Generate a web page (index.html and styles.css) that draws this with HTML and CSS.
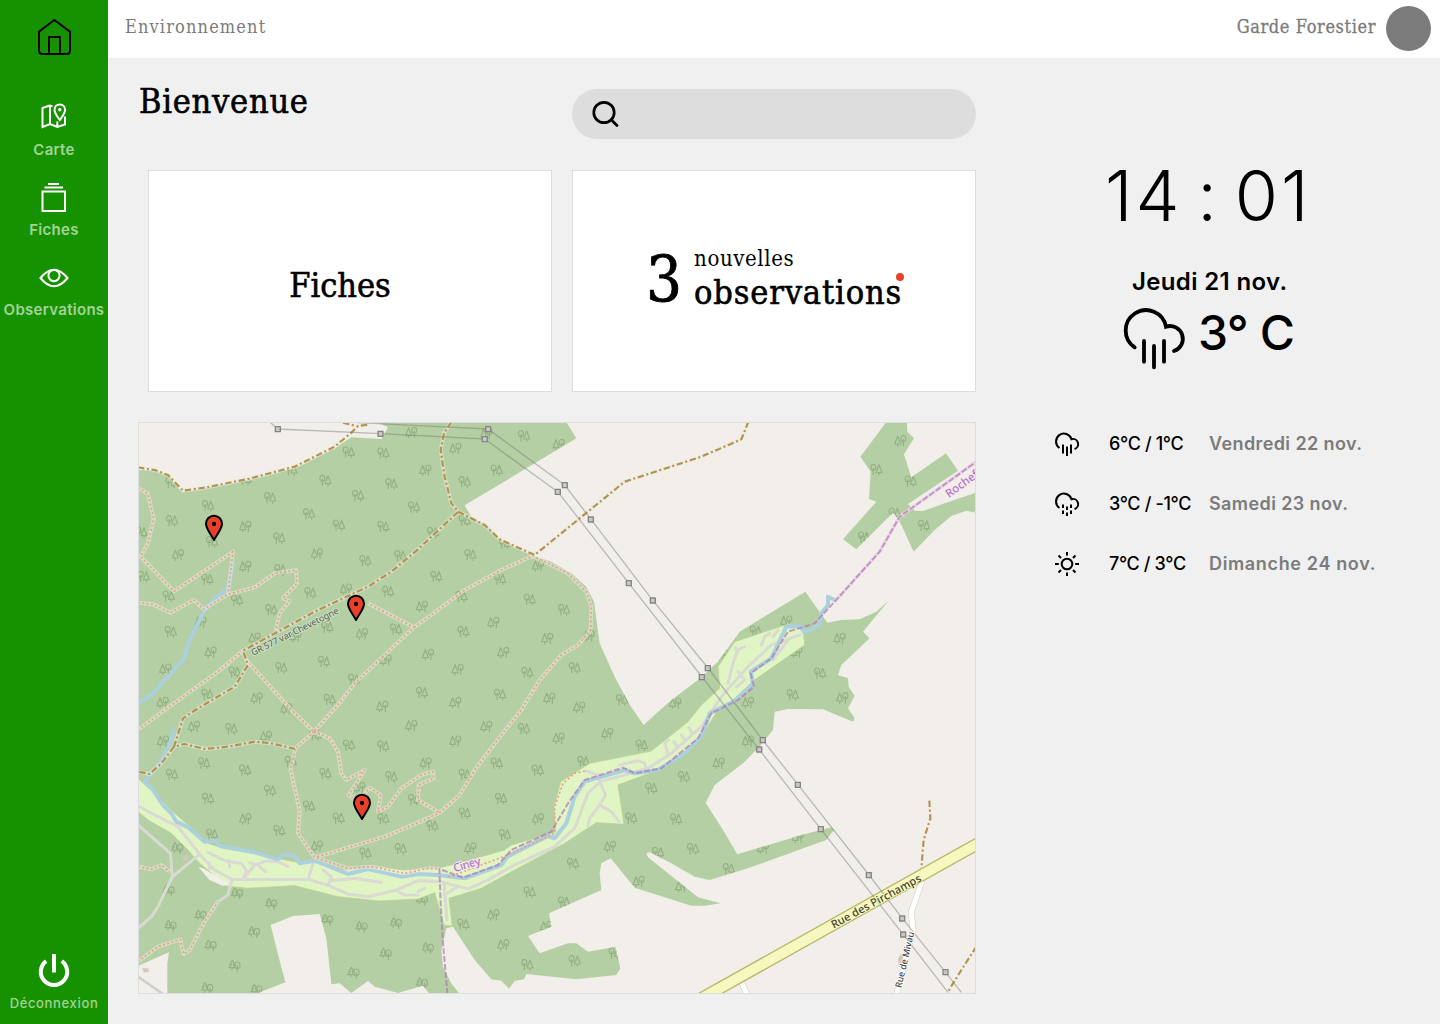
FILE: index.html
```html
<!DOCTYPE html>
<html lang="fr">
<head>
<meta charset="utf-8">
<title>Environnement</title>
<link rel="stylesheet" href="styles.css">
</head>
<body>
<div class="app">
  <nav class="sidebar">
    <a class="home" aria-label="Accueil">
      <svg width="36" height="38" viewBox="0 0 36 38"><path d="M3 13.600 L18.300 2 L34 13.600 V32.500 Q34 36 30.500 36 H6.500 Q3 36 3 32.500 Z M13 36 V19 H24 V36"/></svg>
    </a>
    <a class="item">
      <svg width="30" height="30" viewBox="0 0 30 30"><path d="M13.500 4.200 L10.500 3.500 L3.500 6 V25 L11 22 L18.300 25 L26 22.500 V14.500 M11 4 V22 M18.300 25 V19.500 M20.800 18 C18.300 14.500 15.500 11.300 15.500 7.800 C15.500 4.700 17.800 2.500 20.800 2.500 C23.800 2.500 26.100 4.700 26.100 7.800 C26.100 11.300 23.300 14.500 20.800 18 Z"/><circle class="fill" cx="20.800" cy="7.800" r="1.700"/></svg>
      <span>Carte</span>
    </a>
    <a class="item">
      <svg width="30" height="30" viewBox="0 0 30 30"><path d="M3.500 9.500 H26 V29 H3.500 Z M5.500 5.600 H24 M9 2 H20"/></svg>
      <span>Fiches</span>
    </a>
    <a class="item">
      <svg width="30" height="30" viewBox="0 0 30 30"><path d="M1.500 16 Q15 -.5 28.500 16 Q15 32.500 1.500 16 Z"/><circle cx="15" cy="13.600" r="5.600"/></svg>
      <span>Observations</span>
    </a>
    <a class="logout">
      <svg width="34" height="34" viewBox="0 0 34 34"><path d="M9.200 7.200 A13.200 13.200 0 1 0 24.800 7.200 M17 0 V18.500"/></svg>
      <span>Déconnexion</span>
    </a>
  </nav>

  <div class="page">
    <header class="topbar">
      <span class="brand">Environnement</span>
      <div class="user"><span>Garde Forestier</span><i class="avatar"></i></div>
    </header>

    <div class="content">
      <main class="main">
        <div class="heading">
          <h1>Bienvenue</h1>
          <div class="search">
            <svg width="30" height="30" viewBox="0 0 30 30"><circle cx="13" cy="13.500" r="10.200"/><path d="M20.500 21 L26 26.500"/></svg>
          </div>
        </div>
        <div class="cards">
          <section class="card"><h2>Fiches</h2></section>
          <section class="card">
            <div class="news">
              <span class="count">3</span>
              <div class="news-text"><span class="small">nouvelles</span><span class="large">observations<i class="dot"></i></span></div>
            </div>
          </section>
        </div>
        <div class="map">
          <svg viewBox="3 9 2508 1710" preserveAspectRatio="none">
            <defs>
              <marker id="treeA" markerUnits="userSpaceOnUse" markerWidth="40" markerHeight="40" refX="20" refY="20"><path class="tree" d="M11 36 V14 M11 22 C1 22 1 4 11 4 C21 4 21 22 11 22 M28 37 V29 M19 29 L28 5 L37 29 Z"/></marker>
              <marker id="treeB" markerUnits="userSpaceOnUse" markerWidth="40" markerHeight="40" refX="20" refY="20"><path class="tree" d="M29 36 V14 M29 22 C19 22 19 4 29 4 C39 4 39 22 29 22 M12 37 V29 M3 29 L12 5 L21 29 Z"/></marker>
              <marker id="treeC" markerUnits="userSpaceOnUse" markerWidth="40" markerHeight="40" refX="20" refY="20"><path class="tree" d="M12 33 V25 M3 25 L10 15 H6 L13 3 L20 15 H16 L20 25 Z M28 37 V18 M28 28 C18 28 18 8 28 8 C39 8 39 28 28 28"/></marker>
              <clipPath id="woods"><path d="M0 150 L40 150 90 165 132 215 200 205 330 180 470 145 590 85 640 52 730 57 750 22 715 6 H1285 L1315 55 980 256 1000 290 1050 320 1085 358 1180 405 1240 425 1300 460 1345 500 1368 545 1378 620 1385 670 1430 770 1477 857 1517 915 1583 855 1620 825 1680 780 1740 725 1805 635 2002 515 2068 608 2110 600 2165 598 2215 575 2253 541 2175 635 2195 655 2110 735 2100 765 2130 775 2132 800 2150 828 2130 865 2150 895 2145 905 2055 868 1950 867 1910 875 1905 930 1860 985 1815 1030 1730 1095 1703 1148 1755 1230 1798 1303 1990 1245 2080 1222 2088 1230 2065 1260 1830 1345 1715 1380 1670 1370 1600 1330 1535 1297 1525 1300 1530 1312 1680 1432 1748 1450 1700 1457 1660 1457 1490 1403 1418 1315 1390 1330 1385 1360 1390 1410 1233 1480 1240 1520 1170 1548 1205 1600 1290 1570 1315 1570 1350 1595 1432 1580 1447 1645 1435 1665 1315 1678 1165 1662 1158 1678 1130 1683 1113 1706 1090 1682 1060 1678 1010 1620 945 1520 925 1525 910 1590 915 1640 940 1690 965 1722 H875 L855 1697 780 1719 710 1700 690 1683 640 1719 605 1690 580 1693 565 1555 545 1482 465 1488 398 1515 418 1595 442 1687 360 1719 H88 V1630 L93 1597 0 1638 Z M2245 6 H2307 L2308 35 2328 55 2298 103 2320 172 2424 100 2460 152 2310 252 2330 272 2355 273 2420 250 2515 218 V278 L2485 272 2440 288 2390 330 2327 395 2283 300 2265 278 2155 388 2115 358 2215 245 2193 237 2198 155 2167 110 Z"/></clipPath>
            </defs>
            <rect class="land" width="2520" height="1730"/>
            <g clip-path="url(#woods)">
              <rect class="wood" width="2520" height="1730"/>
              <path class="group-a" d="M632 97 L736 100 562 182 460 150 760 192 660 227 396 234 210 258 513 282 102 303 603 316 736 320 424 355 222 366 682 423 787 408 427 450 208 478 92 529 17 470 517 519 750 515 297 541 400 570 98 636 568 622 774 628 430 744 558 725 290 757 648 779 208 824 575 839 828 262 10 338 100 188 322 178 1158 48 1076 151 980 186 980 302 885 338 997 405 895 470 1086 478 1175 539 1278 570 970 530 976 635 1310 744 1168 758 1086 824 1452 840 852 818 1100 370 2215 149 2318 184 2270 280 2358 317 2178 352 1853 634 2046 760 1964 825 280 927 633 976 736 979 198 1030 321 1051 102 1064 562 1061 760 1071 396 1112 210 1136 458 1025 513 1159 602 1195 424 1232 736 1197 222 1243 788 1287 682 1300 828 1139 532 945 1158 927 1076 1030 1199 1051 980 1064 1089 1136 980 1180 1511 976 1336 1025 1638 1071 1540 1105 1480 1195 1614 1198 883 1218 1100 1245 1305 1331 1175 1417 1278 1447 1560 1298 976 1513 1168 1635 1310 1623 1665 1287 1772 1347 1430 1600"/>
              <path class="group-b" d="M820 38 L322 320 120 405 322 440 537 402 624 508 188 607 350 655 472 650 672 642 218 697 82 748 743 721 356 835 733 860 74 848 952 86 1262 74 862 151 1200 438 852 560 1066 608 1228 656 1352 648 870 704 1096 698 959 749 1234 835 1324 862 952 848 1612 850 1045 42 2287 63 1945 604 2105 656 1975 697 1830 848 2113 834 1752 705 168 920 820 917 75 964 384 950 322 1197 537 1279 664 1103 445 867 1045 920 1262 955 1408 941 952 964 863 1030 1200 1197 997 1285 1416 1280 1502 1385 1066 1485 1096 1575 1742 1030 1830 964 1875 1285 1980 1252 1225 1520 1630 1400"/>
              <path class="group-c" d="M297 1421 L400 1452 188 1487 98 1518 568 1500 774 1510 348 1537 671 1521 218 1577 743 1602 290 1638 647 1659 208 1705 356 1710 92 1412 118 1285 870 1585 852 1690 852 1440"/>
            </g>
            <path class="meadow" d="M0 1075 L50 1120 100 1170 150 1215 210 1270 240 1280 420 1315 490 1330 530 1325 620 1350 700 1340 800 1350 905 1343 960 1330 1100 1290 1120 1275 1252 1237 1248 1160 1268 1085 1355 1030 1540 993 1650 905 1690 855 1745 805 1740 740 1790 665 1950 612 1995 618 2000 675 1850 780 1780 845 1740 870 1680 965 1575 1045 1440 1095 1458 1213 1375 1208 1280 1270 1130 1350 1030 1405 933 1435 943 1518 918 1515 890 1418 840 1437 725 1443 600 1430 470 1397 330 1405 265 1398 180 1325 150 1290 100 1240 30 1200 0 1175 Z"/>
            <path class="clearing" d="M180 1340 L195 1345 275 1393 255 1398 215 1380 Z"/>
            <g class="lanes">
              <path id="lane" class="lane" d="M0 1158 L60 1190 120 1220 185 1303 230 1350 282 1378 510 1378 570 1396 630 1422 690 1430 770 1412 840 1382 910 1385 990 1407 1050 1380 1130 1335 1250 1280 1310 1225 1350 1120 1385 1085 1440 1070 1530 1045 1600 1000 1690 920 1750 830 1830 740 1900 675 1985 645 M0 1215 L97 1300 103 1370 185 1303 M103 1370 L60 1460 40 1490 0 1525 M282 1378 L270 1425 240 1445 M210 1297 L260 1322 310 1330 325 1350 315 1378 350 1335 385 1323 420 1325 450 1340 M215 1345 L212 1328 M275 1340 L272 1322 M382 1355 L360 1335 335 1328 M510 1378 L528 1322 M570 1396 L580 1370 555 1350 M580 1382 L650 1375 730 1387 M775 1412 L800 1425 840 1425 M840 1415 L860 1405 M918 1390 L927 1500 M918 1425 L960 1400 M1385 1085 L1403 1125 1385 1155 1420 1175 1443 1205 M1385 1155 L1355 1195 1350 1217 M1343 1053 L1380 1065 1385 1085 M1445 1035 L1500 1022 1520 1030 1525 1045 M1590 1000 L1580 970 1592 960 M1618 980 L1608 965 M1640 960 L1630 945 M1662 938 L1652 922 M1770 790 L1785 730 1800 690 1820 680 M1795 690 L1792 682 M1800 755 L1820 780 1795 802 M1870 675 L1880 650 1895 640 M1905 650 L1920 630 M1905 720 L1950 660"/>
              <use href="#lane" class="lane-core"/>
            </g>
            <path class="lane" d="M0 1670 L75 1722"/>
            <path class="building" d="M132 1315 L145 1303 155 1313 142 1326 Z M12 1645 H30 L34 1655 18 1658 Z M2280 1615 L2292 1598 2300 1604 2292 1640 2282 1640 Z"/>
            <path class="river" d="M0 852 L45 820 135 720 155 660 200 570 230 535 265 510 280 470 284 432 M107 930 L95 975 60 1035 20 1085 45 1110 75 1155 100 1180 115 1205 150 1222 200 1265 235 1262 245 1278 350 1297 420 1318 440 1302 470 1308 485 1330 530 1322 630 1362 690 1347 790 1370 840 1362 900 1365 980 1375 1090 1335 1108 1310 1230 1248 1250 1255 1285 1210 1310 1130 1340 1085 1460 1050 1490 1060 1560 1050 1640 1000 1690 950 1715 880 1790 843 1845 790 1838 755 1900 715 1945 620 1985 618 2000 638 2045 615 2050 580 2070 555 2070 530 2090 540"/>
            <path class="track-halo" d="M0 203 L30 222 47 295 30 370 8 410 108 514 290 392 M0 548 L45 553 97 578 168 540 197 568 270 523 350 502 410 460 474 450 477 490 435 535 455 543 425 580 412 635 M315 692 L240 755 80 870 0 930 M325 720 L460 870 528 935 600 855 650 790 828 622 690 550 M828 622 L900 570 980 510 1100 445 1185 408 1290 460 1345 515 1360 560 1358 630 1320 675 1270 705 1205 780 1150 870 1090 945 1010 1050 965 1125 905 1178 840 1208 740 1250 532 1312 M528 935 L575 955 600 995 610 1060 625 1080 680 1050 632 1125 660 1145 695 1103 728 1125 720 1175 750 1160 790 1105 850 1065 885 1055 887 1075 842 1095 840 1140 905 1178 M528 935 L472 985 458 1050 485 1170 480 1240 530 1312 630 1345 700 1340 800 1360 870 1345 905 1347 M0 1625 L60 1580 127 1558 137 1602 155 1590 200 1505 240 1445 M285 392 L280 440 270 520 M0 1340 L40 1348 70 1335 95 1355"/>
            <path class="track" d="M0 203 L30 222 47 295 30 370 8 410 108 514 290 392 M0 548 L45 553 97 578 168 540 197 568 270 523 350 502 410 460 474 450 477 490 435 535 455 543 425 580 412 635 M315 692 L240 755 80 870 0 930 M325 720 L460 870 528 935 600 855 650 790 828 622 690 550 M828 622 L900 570 980 510 1100 445 1185 408 1290 460 1345 515 1360 560 1358 630 1320 675 1270 705 1205 780 1150 870 1090 945 1010 1050 965 1125 905 1178 840 1208 740 1250 532 1312 M528 935 L575 955 600 995 610 1060 625 1080 680 1050 632 1125 660 1145 695 1103 728 1125 720 1175 750 1160 790 1105 850 1065 885 1055 887 1075 842 1095 840 1140 905 1178 M528 935 L472 985 458 1050 485 1170 480 1240 530 1312 630 1345 700 1340 800 1360 870 1345 905 1347 M0 1625 L60 1580 127 1558 137 1602 155 1590 200 1505 240 1445 M285 392 L280 440 270 520 M0 1340 L40 1348 70 1335 95 1355 M930 1372 L1110 1305 1250 1240 1250 1160 1275 1090 1310 1060 1345 1052"/>
            <path class="trail-halo" d="M0 142 L50 150 90 165 135 212 200 203 330 177 470 140 590 80 640 38 660 18 690 14 M615 8 L655 18 M940 6 L918 40 908 90 920 170 940 250 962 276 1040 315 1085 358 1190 405 1460 185 1690 110 1810 58 1830 8 M960 276 L840 388 760 455 690 500 530 575 315 692 330 735 290 800 180 865 135 895 108 980 140 972 200 987 270 980 350 965 400 970 472 987 M108 980 L70 1030 35 1062 0 1055"/>
            <path class="trail" d="M0 142 L50 150 90 165 135 212 200 203 330 177 470 140 590 80 640 38 660 18 690 14 M615 8 L655 18 M940 6 L918 40 908 90 920 170 940 250 962 276 1040 315 1085 358 1190 405 1460 185 1690 110 1810 58 1830 8 M960 276 L840 388 760 455 690 500 530 575 315 692 330 735 290 800 180 865 135 895 108 980 140 972 200 987 270 980 350 965 400 970 472 987 M108 980 L70 1030 35 1062 0 1055 M2374 1142 L2377 1195 2357 1260 2350 1345 M2515 1580 L2470 1650 2430 1715"/>
            <path class="border-halo" d="M2090 545 L2225 395 2285 290 2515 125"/>
            <path class="border" d="M904 1345 L908 1450 915 1570 928 1719 M912 1350 L975 1373 1080 1335 1120 1290 1240 1235 1290 1150 1340 1080 1455 1043 1490 1060 1570 1045 1680 955 1720 880 1800 840 1848 800 1838 760 1900 715 1950 635 2030 610 2090 545 2225 395 2285 290 2515 125"/>
            <path class="street-case" d="M2355 1375 L2320 1475 2325 1530 2295 1650 2275 1725 M1810 1685 L1828 1725"/>
            <path class="street" d="M2355 1375 L2320 1475 2325 1530 2295 1650 2275 1725 M1810 1685 L1828 1725"/>
            <path class="road-case" d="M1680 1741 L2530 1265"/>
            <path class="road" d="M1680 1741 L2530 1265"/>
            <path class="power" d="M398 8 L419 27 728 41 1040 57 1260 216 1473 490 1692 771 1863 988 2049 1228 2296 1544 2430 1717 M660 8 L840 17 1050 27 1280 195 1359 298 1545 542 1710 744 1874 960 1980 1094 2193 1365 2293 1495 2423 1657 2470 1717"/>
            <path class="pylon" d="M412 20h15v15h-15z M720 34h15v15h-15z M1033 50h15v15h-15z M1043 20h15v15h-15z M1252 208h15v15h-15z M1273 188h15v15h-15z M1351 291h15v15h-15z M1465 482h15v15h-15z M1537 534h15v15h-15z M1684 764h15v15h-15z M1702 737h15v15h-15z M1856 981h15v15h-15z M1867 953h15v15h-15z M1972 1087h15v15h-15z M2041 1220h15v15h-15z M2185 1358h15v15h-15z M2285 1488h15v15h-15z M2288 1536h15v15h-15z M2415 1649h15v15h-15z"/>
            <text class="label path-label" textLength="290" transform="translate(345 708) rotate(-26.500)">GR 577 var Chevetogne</text>
            <text class="label admin-label" textLength="84" transform="translate(950 1357) rotate(-17)">Ciney</text>
            <text class="label admin-label" textLength="112" transform="translate(2433 234) rotate(-36)">Rochef</text>
            <text class="label road-label" textLength="302" transform="translate(2087 1526) rotate(-28.500)">Rue des Pirchamps</text>
            <text class="label street-label" textLength="172" transform="translate(2290 1705) rotate(-77)">Rue de Mivau</text>
            <path class="pin" d="M228 360 C216 338 204 326 204 311 A24 24 0 0 1 252 311 C252 326 240 338 228 360 Z M654 600 C642 578 630 566 630 551 A24 24 0 0 1 678 551 C678 566 666 578 654 600 Z M672 1197 C660 1175 648 1163 648 1148 A24 24 0 0 1 696 1148 C696 1163 684 1175 672 1197 Z"/>
            <path class="pin-hole" d="M228 312 h.01 M654 552 h.01 M672 1149 h.01"/>
          </svg>
        </div>
      </main>

      <aside class="weather">
        <div class="clock">14 : 01</div>
        <div class="date">Jeudi 21 nov.</div>
        <div class="now">
          <svg width="60" height="60" viewBox="252 477 180 180"><path d="M284 592 A61 61 0 1 1 378 530 A37 37 0 1 1 402 603 M312 573 V635 M342 588 V652 M372 573 V635"/></svg>
          <span>3° C</span>
        </div>
        <ul class="forecast">
          <li><svg width="24" height="24" viewBox="0 0 24 24"><path d="M4.500 16 A7.900 7.900 0 1 1 16.500 7.200 A5 5 0 0 1 19.500 17 M8 12.500 V21.500 M12 14.500 V24 M16 12.500 V21.500"/></svg><span class="temp">6°C / 1°C</span><span class="day">Vendredi 22 nov.</span></li>
          <li><svg width="24" height="24" viewBox="0 0 24 24"><path d="M4.500 16 A7.900 7.900 0 1 1 16.500 7.200 A5 5 0 0 1 19.500 17 M8 12.500 V16 M8 18.500 V22 M12 14.500 V18 M12 20.500 V24 M16 12.500 V16 M16 18.500 V22"/></svg><span class="temp">3°C / -1°C</span><span class="day">Samedi 23 nov.</span></li>
          <li><svg width="24" height="24" viewBox="0 0 24 24"><circle cx="12" cy="12" r="5.300"/><path d="M12 0 V3.500 M12 20.500 V24 M0 12 H3.800 M20.200 12 H24 M3.500 3.500 L6 6 M18 18 L20.500 20.500 M20.500 3.500 L18 6 M6 18 L3.500 20.500"/></svg><span class="temp">7°C / 3°C</span><span class="day wide">Dimanche 24 nov.</span></li>
        </ul>
      </aside>
    </div>
  </div>
</div>
</body>
</html>
```
FILE: styles.css
```css
* { box-sizing: border-box; }
body { margin: 0; background: #f0f0f0; color: #000; font-family: Inter, "Open Sans", sans-serif; font-feature-settings: "calt" 0; }
h1, h2, ul { margin: 0; padding: 0; list-style: none; font-weight: 400; }
svg { display: block; fill: none; overflow: visible; }
span, h1, h2 { white-space: nowrap; }

.app { display: flex; width: 1440px; height: 1024px; overflow: hidden; }

.sidebar { width: 108px; flex: none; display: flex; flex-direction: column; align-items: center; background: #169200; padding: 18px 0 11px; }
.sidebar svg { stroke: #fff; stroke-width: 2; }
.home { height: 79px; }
.home svg { stroke: #000; stroke-linejoin: round; }
.item { height: 80px; display: flex; flex-direction: column; align-items: center; padding-top: 5px; color: #a2d399; font-size: 15px; font-weight: 600; line-height: 20px; letter-spacing: .3px; gap: 8px; }
.item .fill { fill: #fff; stroke: none; }
.logout { margin-top: auto; display: flex; flex-direction: column; align-items: center; gap: 5px; color: #a2d399; font-size: 13px; font-weight: 500; line-height: 20px; letter-spacing: .65px; }
.logout svg { stroke-width: 4; }

.page { flex: 1; display: flex; flex-direction: column; }
.topbar { height: 58px; background: #fff; display: flex; justify-content: space-between; align-items: center; padding: 0 9px 2px 17px; color: #7b7b7b; font-family: "DejaVu Serif Condensed", "DejaVu Serif", serif; font-stretch: condensed; font-size: 18px; }
.brand { line-height: 54px; align-self: flex-start; letter-spacing: 1.15px; }
.user { display: flex; align-items: center; gap: 10px; letter-spacing: .62px; -webkit-text-stroke: .3px #7b7b7b; }
.user span { margin-top: -3px; }
.avatar { width: 45px; height: 45px; border-radius: 50%; background: #7b7b7b; }

.content { flex: 1; display: flex; padding-left: 30px; }
.main { width: 838px; display: flex; flex-direction: column; font-family: "DejaVu Serif Condensed", "DejaVu Serif", serif; font-stretch: condensed; }
.heading { height: 112px; display: flex; justify-content: space-between; align-items: flex-start; padding-top: 31px; }
h1 { font-size: 34px; line-height: 24px; padding-left: 1px; letter-spacing: .75px; -webkit-text-stroke: .6px #000; }
.search { width: 404px; height: 50px; border-radius: 25px; background: #ddd; padding: 10px 19px; }
.search svg { stroke: #000; stroke-width: 2.7; stroke-linecap: round; }
.cards { display: grid; grid-template-columns: 404px 404px; gap: 20px; height: 222px; padding-left: 10px; }
.card { background: #fff; border: 1px solid #ddd; display: flex; align-items: center; justify-content: center; }
h2 { font-size: 34px; line-height: 40px; padding: 8px 20px 0 0; -webkit-text-stroke: .6px #000; }
.news { display: flex; align-items: center; gap: 12px; }
.count { font-size: 63px; line-height: 60px; -webkit-text-stroke: .8px #000; }
.news-text { display: flex; flex-direction: column; margin-top: -9px; }
.small { font-size: 22px; line-height: 30px; letter-spacing: .6px; }
.large { font-size: 34px; line-height: 36px; position: relative; letter-spacing: .85px; -webkit-text-stroke: .6px #000; }
.dot { position: absolute; right: -2px; top: -1px; width: 8px; height: 8px; border-radius: 50%; background: #ea4226; }

.map { margin-top: 30px; height: 572px; border: 1px solid #ddd; overflow: hidden; }
.map svg { width: 836px; height: 570px; overflow: hidden; }
.map path { stroke-linejoin: round; }
.land, .clearing { fill: #f2efea; }
.wood { fill: #b4cfa3; }
.tree { fill: none; stroke: #95b284; stroke-width: 3.6; }
.group-a { marker: url(#treeA); }
.group-b { marker: url(#treeB); }
.group-c { marker: url(#treeC); }
.meadow { fill: #e1f4c4; stroke: #b9d393; stroke-width: 2.5; }
.lane { stroke: #d0d0ca; stroke-width: 8; stroke-linecap: round; }
.lane-core { stroke: #e8e7e4; }
.lanes .lane { stroke: #d9dad2; }
.building { fill: #d5c6bd; }
.river { stroke: #acd0dc; stroke-width: 12; stroke-linecap: round; }
.track-halo, .trail-halo { stroke: #e9ebdd; stroke-opacity: .55; stroke-width: 12; }
.track { stroke: #ec9d8f; stroke-width: 5; stroke-dasharray: 6 7; }
.trail { stroke: #b4924f; stroke-width: 6.5; stroke-dasharray: 19 8 6 8; }
.border-halo { stroke: #ead6e6; stroke-width: 10; }
.border { stroke: #b179b5; stroke-opacity: .7; stroke-width: 6; stroke-dasharray: 18 6; }
.street-case { stroke: #d8d5d0; stroke-width: 19; }
.street { stroke: #fff; stroke-width: 15; }
.road-case { stroke: #b7b76a; stroke-width: 38; }
.road { stroke: #f7f8bf; stroke-width: 30; }
.power { stroke: #777; stroke-opacity: .45; stroke-width: 4; }
.pylon { fill: #c9c8c6; stroke: #858585; stroke-width: 4; }
.label { font-family: "Noto Sans", "Open Sans", sans-serif; font-stretch: normal; font-weight: 500; paint-order: stroke; }
.path-label { font-size: 28px; fill: #62705c; stroke: #d3e2c8; stroke-width: 5; }
.admin-label { font-size: 34px; fill: #b675bd; stroke: #f3eaf0; stroke-width: 6; }
.road-label { font-size: 33px; fill: #444433; stroke: #f7f8bf; stroke-width: 5; }
.street-label { font-size: 27px; fill: #444; stroke: #fff; stroke-width: 5; }
.pin { fill: #e9402a; stroke: #000; stroke-width: 6; }
.pin-hole { stroke: #000; stroke-width: 13; stroke-linecap: round; }

.weather { width: 464px; padding-top: 98px; display: flex; flex-direction: column; }
.clock { font-size: 70px; font-weight: 350; line-height: 80px; white-space: pre; padding-left: 129px; letter-spacing: 3px; word-spacing: -8px; }
.date { font-size: 24px; font-weight: 600; line-height: 30px; padding-left: 156px; margin-top: 31px; letter-spacing: .35px; }
.now { display: flex; align-items: flex-start; gap: 14px; height: 60px; padding-left: 148px; margin-top: 12px; font-size: 48px; font-weight: 500; line-height: 48px; letter-spacing: -.8px; }
.now svg { stroke: #000; stroke-width: 11.5; stroke-linecap: round; }
.forecast { margin-top: 45px; padding-left: 79px; }
.forecast li { height: 60px; display: grid; grid-template-columns: 54px 100px 1fr; align-items: center; font-size: 18px; line-height: 24px; }
.forecast svg { stroke: #000; stroke-width: 2; }
.temp { font-weight: 450; letter-spacing: -.35px; }
.day { color: #7b7b7b; font-weight: 600; letter-spacing: .4px; }
.day.wide { letter-spacing: .65px; }
```
